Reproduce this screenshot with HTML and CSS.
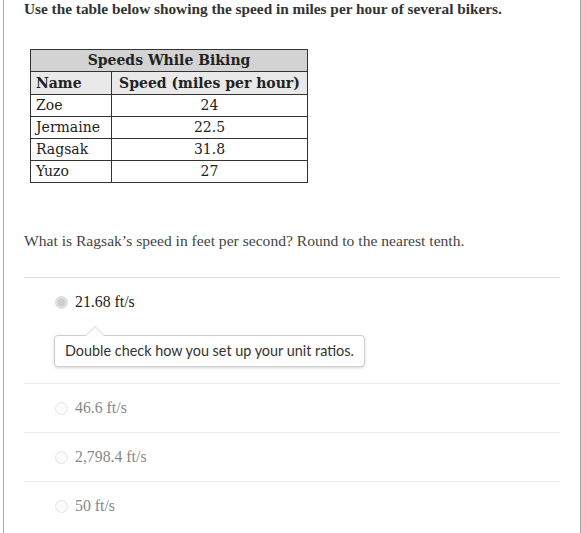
FILE: index.html
```html
<!DOCTYPE html>
<html>
<head>
<meta charset="utf-8">
<link rel="stylesheet" href="styles.css">
</head>
<body>
<div class="frame">
  <p class="intro">Use the table below showing the speed in miles per hour of several bikers.</p>
  <table class="speeds">
    <colgroup><col class="c1"><col class="c2"></colgroup>
    <tr class="title"><th colspan="2">Speeds While Biking</th></tr>
    <tr class="head"><th class="name">Name</th><th>Speed (miles per hour)</th></tr>
    <tr><td class="name">Zoe</td><td class="num">24</td></tr>
    <tr><td class="name">Jermaine</td><td class="num">22.5</td></tr>
    <tr><td class="name">Ragsak</td><td class="num">31.8</td></tr>
    <tr><td class="name">Yuzo</td><td class="num">27</td></tr>
  </table>
  <p class="question">What is Ragsak’s speed in feet per second? Round to the nearest tenth.</p>
  <div class="options">
    <div class="option selected">
      <div class="row"><span class="radio checked"></span><span class="label">21.68 ft/s</span></div>
      <div class="tip">Double check how you set up your unit ratios.</div>
    </div>
    <div class="option">
      <div class="row"><span class="radio"></span><span class="label">46.6 ft/s</span></div>
    </div>
    <div class="option">
      <div class="row"><span class="radio"></span><span class="label">2,798.4 ft/s</span></div>
    </div>
    <div class="option">
      <div class="row"><span class="radio"></span><span class="label">50 ft/s</span></div>
    </div>
  </div>
</div>
</body>
</html>
```
FILE: styles.css
```css
html, body {
  margin: 0;
  padding: 0;
  background: #fff;
}
.frame {
  margin-left: 3px;
  width: 536px;
  min-height: 533px;
  padding: 0 20px;
  border-left: 1px solid #a9a9a9;
  border-right: 1px solid #a9a9a9;
  box-sizing: content-box;
}
.intro {
  margin: 0;
  font-family: "Liberation Serif", serif;
  font-weight: bold;
  font-size: 15.3px;
  line-height: 17px;
  color: #333;
}
.speeds {
  margin: 32px 0 0 6px;
  border-collapse: collapse;
  table-layout: fixed;
  width: 277px;
  font-family: "DejaVu Serif", serif;
  font-size: 14px;
  color: #222;
}
.speeds .c1 { width: 81px; }
.speeds .c2 { width: 196px; }
.speeds th, .speeds td {
  border: 1px solid #333;
  height: 21px;
  padding: 0 5px;
  line-height: 21px;
}
.speeds .head th { height: 22px; }
.speeds .title th {
  background: #d3d3d3;
  text-align: center;
  font-weight: bold;
}
.speeds .head th {
  background: #e9e9e9;
  font-weight: bold;
  text-align: center;
}
.speeds .head th.name { text-align: left; }
.speeds td.name { text-align: left; }
.speeds td.num { text-align: center; }
.question {
  margin: 49px 0 0;
  font-family: "Liberation Serif", serif;
  font-size: 15.6px;
  line-height: 17px;
  color: #444;
}
.options {
  margin-top: 28px;
}
.option {
  border-top: 1px solid #ededed;
}
.option.selected {
  border-top-color: #dcdcdc;
  padding-bottom: 16px;
}
.row {
  height: 48px;
  display: flex;
  align-items: center;
  padding-left: 31px;
  gap: 7px;
}
.radio {
  width: 11px;
  height: 11px;
  border-radius: 50%;
  border: 1px solid #e4e4e4;
  background: #fbfbfb;
  flex: none;
}
.radio.checked {
  border-color: #dadada;
  background: radial-gradient(circle, #cdcdcd 0, #cdcdcd 3.5px, #e2e2e2 4.5px);
}
.label {
  font-family: "Liberation Serif", serif;
  font-size: 15.8px;
  color: #888;
}
.selected .label { color: #222; }
.tip {
  position: relative;
  margin: 9px 0 0 30px;
  width: 289px;
  height: 30px;
  padding: 0 10px;
  border: 1px solid #cfcfcf;
  border-radius: 4px;
  box-shadow: 0 1px 3px rgba(0,0,0,0.15);
  font-family: Lato, sans-serif;
  font-size: 14.4px;
  line-height: 30px;
  white-space: nowrap;
  color: #333;
  background: #fff;
}
.tip::before,
.tip::after {
  content: "";
  position: absolute;
  left: 30px;
  width: 0;
  height: 0;
  border-left: 10px solid transparent;
  border-right: 10px solid transparent;
}
.tip::before {
  top: -10px;
  border-bottom: 10px solid #cfcfcf;
}
.tip::after {
  top: -9px;
  left: 30px;
  border-bottom: 10px solid #fff;
}
```
